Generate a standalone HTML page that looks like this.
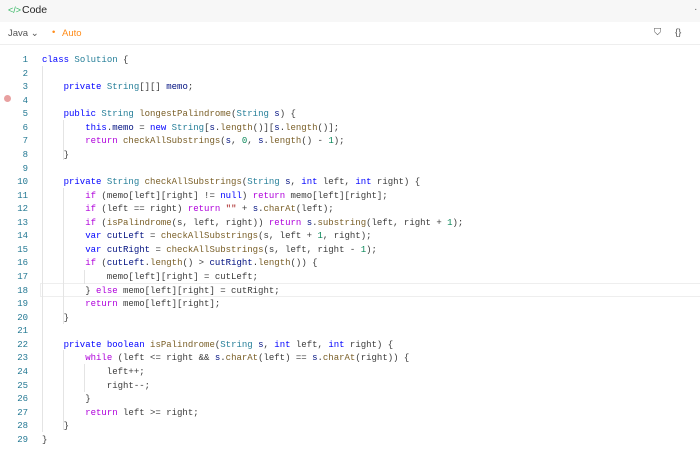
<html><head><style>
body{margin:0;width:700px;height:449px;background:#fff;font-family:"Liberation Sans",sans-serif;overflow:hidden;position:relative}
.top{position:absolute;left:0;top:0;width:700px;height:22px;background:#f7f7f7;font-size:10.5px;color:#262626}
.bar{position:absolute;left:0;top:22px;width:700px;height:22px;border-bottom:1px solid #eee;font-size:9.5px}
.code{position:absolute;left:0;top:54px;font-family:"Liberation Mono",monospace;font-size:9px;line-height:13.57px;white-space:pre;color:#3b3b3b}
.ln{position:absolute;left:0;top:0;width:28px;text-align:right;color:#237893}
.tx{position:absolute;left:42px;top:0}
.k{color:#0000ff}.t{color:#267f99}.f{color:#795e26}.c{color:#af00db}.v{color:#001080}.n{color:#098658}.s{color:#a31515}
.g{position:absolute;width:1px;background:#e4e4e4}
</style></head><body>
<div class="top"><span style="position:absolute;left:8px;top:5px;color:#2db55d;font-size:9px">&lt;/&gt;</span><span style="position:absolute;left:22px;top:4px">Code</span><span style="position:absolute;left:694px;top:3px;color:#666">·</span></div>
<div class="bar"><span style="position:absolute;left:8px;top:6px;color:#555">Java ⌄</span><span style="position:absolute;left:52px;top:5px;color:#ff8c1a">•</span><span style="position:absolute;left:62px;top:6px;color:#ff8c1a">Auto</span>
<span style="position:absolute;left:654px;top:5px;color:#555">⛉</span><span style="position:absolute;left:675px;top:5px;color:#555">{}</span></div>
<div style="position:absolute;left:4px;top:95px;width:7px;height:7px;border-radius:50%;background:#e8a0a0"></div>
<div style="position:absolute;left:40px;top:283px;width:660px;height:12px;border:1px solid #eee"></div>
<div class="g" style="left:42px;top:66px;height:366px"></div>
<div class="g" style="left:63px;top:120px;height:40px"></div>
<div class="g" style="left:63px;top:188px;height:136px"></div>
<div class="g" style="left:63px;top:350px;height:80px"></div>
<div class="g" style="left:84px;top:270px;height:14px"></div>
<div class="g" style="left:84px;top:364px;height:28px"></div>
<div class="code"><div class="ln">1
2
3
4
5
6
7
8
9
10
11
12
13
14
15
16
17
18
19
20
21
22
23
24
25
26
27
28
29</div><div class="tx"><span class="k">class</span> <span class="t">Solution</span> {

    <span class="k">private</span> <span class="t">String</span>[][] <span class="v">memo</span>;

    <span class="k">public</span> <span class="t">String</span> <span class="f">longestPalindrome</span>(<span class="t">String</span> <span class="v">s</span>) {
        <span class="k">this</span>.<span class="v">memo</span> = <span class="k">new</span> <span class="t">String</span>[<span class="v">s</span>.<span class="f">length</span>()][<span class="v">s</span>.<span class="f">length</span>()];
        <span class="c">return</span> <span class="f">checkAllSubstrings</span>(<span class="v">s</span>, <span class="n">0</span>, <span class="v">s</span>.<span class="f">length</span>() - <span class="n">1</span>);
    }

    <span class="k">private</span> <span class="t">String</span> <span class="f">checkAllSubstrings</span>(<span class="t">String</span> <span class="v">s</span>, <span class="k">int</span> left, <span class="k">int</span> right) {
        <span class="c">if</span> (memo[left][right] != <span class="k">null</span>) <span class="c">return</span> memo[left][right];
        <span class="c">if</span> (left == right) <span class="c">return</span> <span class="s">""</span> + <span class="v">s</span>.<span class="f">charAt</span>(left);
        <span class="c">if</span> (<span class="f">isPalindrome</span>(s, left, right)) <span class="c">return</span> <span class="v">s</span>.<span class="f">substring</span>(left, right + <span class="n">1</span>);
        <span class="k">var</span> <span class="v">cutLeft</span> = <span class="f">checkAllSubstrings</span>(s, left + <span class="n">1</span>, right);
        <span class="k">var</span> <span class="v">cutRight</span> = <span class="f">checkAllSubstrings</span>(s, left, right - <span class="n">1</span>);
        <span class="c">if</span> (<span class="v">cutLeft</span>.<span class="f">length</span>() &gt; <span class="v">cutRight</span>.<span class="f">length</span>()) {
            memo[left][right] = cutLeft;
        } <span class="c">else</span> memo[left][right] = cutRight;
        <span class="c">return</span> memo[left][right];
    }

    <span class="k">private</span> <span class="k">boolean</span> <span class="f">isPalindrome</span>(<span class="t">String</span> <span class="v">s</span>, <span class="k">int</span> left, <span class="k">int</span> right) {
        <span class="c">while</span> (left &lt;= right &amp;&amp; <span class="v">s</span>.<span class="f">charAt</span>(left) == <span class="v">s</span>.<span class="f">charAt</span>(right)) {
            left++;
            right--;
        }
        <span class="c">return</span> left &gt;= right;
    }
}</div></div>
</body></html>
